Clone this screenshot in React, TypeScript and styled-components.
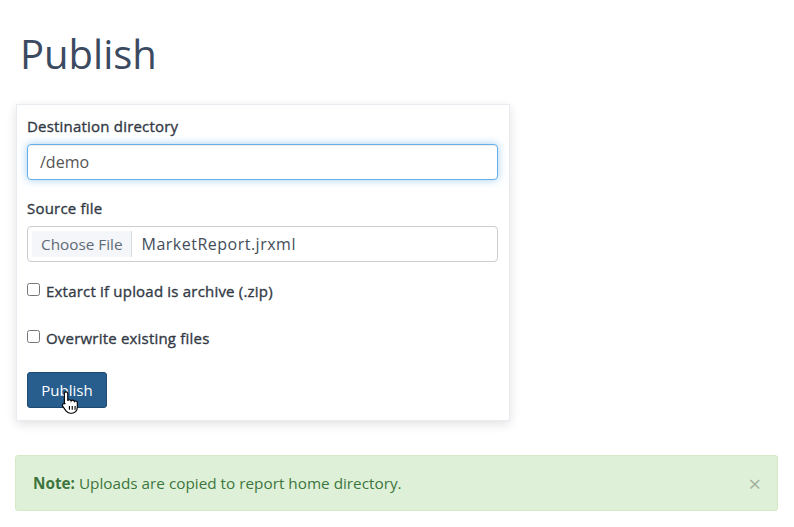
import React from "react";
import styled, { createGlobalStyle, css } from "styled-components";

const Global = createGlobalStyle`
  html, body { margin: 0; padding: 0; background: #fff; }
  body { font-family: "Open Sans", "Noto Sans", sans-serif; color: #333; }
  * { box-sizing: border-box; }
`;

const semibold = css`
  font-weight: 400;
  letter-spacing: 0.2px;
  -webkit-text-stroke: 0.35px currentColor;
`;

const Page = styled.div`
  padding: 0 16px 0 15px;
  display: flex;
  flex-direction: column;
`;

const Title = styled.h1`
  margin: 28px 0 24px 5px;
  font-size: 40px;
  font-weight: 400;
  line-height: 52px;
  color: #3b4a60;
`;

const Card = styled.form`
  margin-left: 1px;
  width: 494px;
  background: #fff;
  border: 1px solid #e8ecf0;
  box-shadow: 0 3px 10px rgba(0, 0, 0, 0.12);
  padding: 11px 11px 12px 10px;
  display: flex;
  flex-direction: column;
`;

const Group = styled.div`
  display: flex;
  flex-direction: column;
  margin-bottom: 18px;
`;

const Label = styled.label`
  font-size: 15px;
  ${semibold};
  color: #333a45;
  line-height: 20px;
  margin-bottom: 8px;
`;

const TextInput = styled.input`
  height: 36px;
  width: 100%;
  border: 1px solid #66afe9;
  border-radius: 4px;
  padding: 0 12px;
  font-family: inherit;
  font-size: 16px;
  color: #555;
  outline: none;
  box-shadow: inset 0 1px 1px rgba(0, 0, 0, 0.075), 0 0 8px rgba(102, 175, 233, 0.6);
`;

const FileBox = styled.div`
  height: 36px;
  border: 1px solid #ccc;
  border-radius: 4px;
  display: flex;
  align-items: stretch;
  padding: 4px;
`;

const FileButton = styled.span`
  background: #f4f6f9;
  border-right: 1px solid #d8dbe0;
  color: #606a77;
  padding: 0 9px 0 9px;
  font-size: 15.3px;
  display: flex;
  align-items: center;
`;

const FileName = styled.span`
  color: #444d5a;
  padding-left: 9px;
  font-size: 16px;
  letter-spacing: 0.5px;
  display: flex;
  align-items: center;
`;

const CheckRow = styled.label<{ $top: number }>`
  display: flex;
  align-items: center;
  gap: 6px;
  font-size: 15px;
  ${semibold};
  color: #333a45;
  line-height: 20px;
  margin: ${(p) => p.$top}px 0 0 0;
`;

const Box = styled.input`
  width: 13px;
  height: 13px;
  margin: 0;
  position: relative;
  top: -2px;
`;

const ButtonWrap = styled.div`
  position: relative;
  margin-top: 24px;
  align-self: flex-start;
`;

const Button = styled.button`
  width: 80px;
  height: 36px;
  background: #285e8e;
  border: 1px solid #1f4b73;
  border-radius: 3px;
  color: #fff;
  font-family: inherit;
  font-size: 15px;
  padding: 0;
`;

const Cursor = styled.svg`
  position: absolute;
  left: 34px;
  top: 18px;
  pointer-events: none;
`;

const Alert = styled.div`
  margin-top: 34px;
  height: 56px;
  background: #dff0d8;
  border: 1px solid #d6e9c6;
  border-radius: 3px;
  color: #3c763d;
  font-size: 15.3px;
  display: flex;
  align-items: center;
  justify-content: space-between;
  padding: 0 16px 0 17px;
`;

const Strong = styled.strong`
  font-weight: 700;
`;

const Close = styled.span`
  color: #a3b19f;
  font-size: 22px;
  line-height: 1;
  font-weight: 400;
`;

export default function App() {
  return (
    <>
      <Global />
      <Page>
        <Title>Publish</Title>
        <Card onSubmit={(e) => e.preventDefault()}>
          <Group>
            <Label>Destination directory</Label>
            <TextInput defaultValue="/demo" />
          </Group>
          <Group>
            <Label>Source file</Label>
            <FileBox>
              <FileButton>Choose File</FileButton>
              <FileName>MarketReport.jrxml</FileName>
            </FileBox>
          </Group>
          <CheckRow $top={1}>
            <Box type="checkbox" />
            Extarct if upload is archive (.zip)
          </CheckRow>
          <CheckRow $top={27}>
            <Box type="checkbox" />
            Overwrite existing files
          </CheckRow>
          <ButtonWrap>
            <Button type="button">Publish</Button>
            <Cursor width="18" height="25" viewBox="0 0 16 22">
              <path
                d="M4.5 1.5c.8 0 1.5.7 1.5 1.5v6.5c.3-.6.8-1 1.5-1 .8 0 1.4.5 1.5 1.2.3-.5.8-.8 1.4-.8.8 0 1.4.6 1.5 1.3.3-.3.7-.5 1.1-.5.9 0 1.5.7 1.5 1.6v4.2c0 2.8-2.2 5-5 5H8.3c-1.6 0-3-.8-3.9-2L1.6 14.4c-.5-.7-.4-1.6.2-2.1.6-.5 1.5-.4 2 .2L3 11.4V3c0-.8.7-1.5 1.5-1.5z"
                fill="#fff"
                stroke="#000"
                strokeWidth="1"
              />
              <path d="M7.5 14v3.5M10 14v3.5M12.5 14v3.5" stroke="#000" strokeWidth="1" />
            </Cursor>
          </ButtonWrap>
        </Card>
        <Alert>
          <span>
            <Strong>Note:</Strong> Uploads are copied to report home directory.
          </span>
          <Close>×</Close>
        </Alert>
      </Page>
    </>
  );
}
